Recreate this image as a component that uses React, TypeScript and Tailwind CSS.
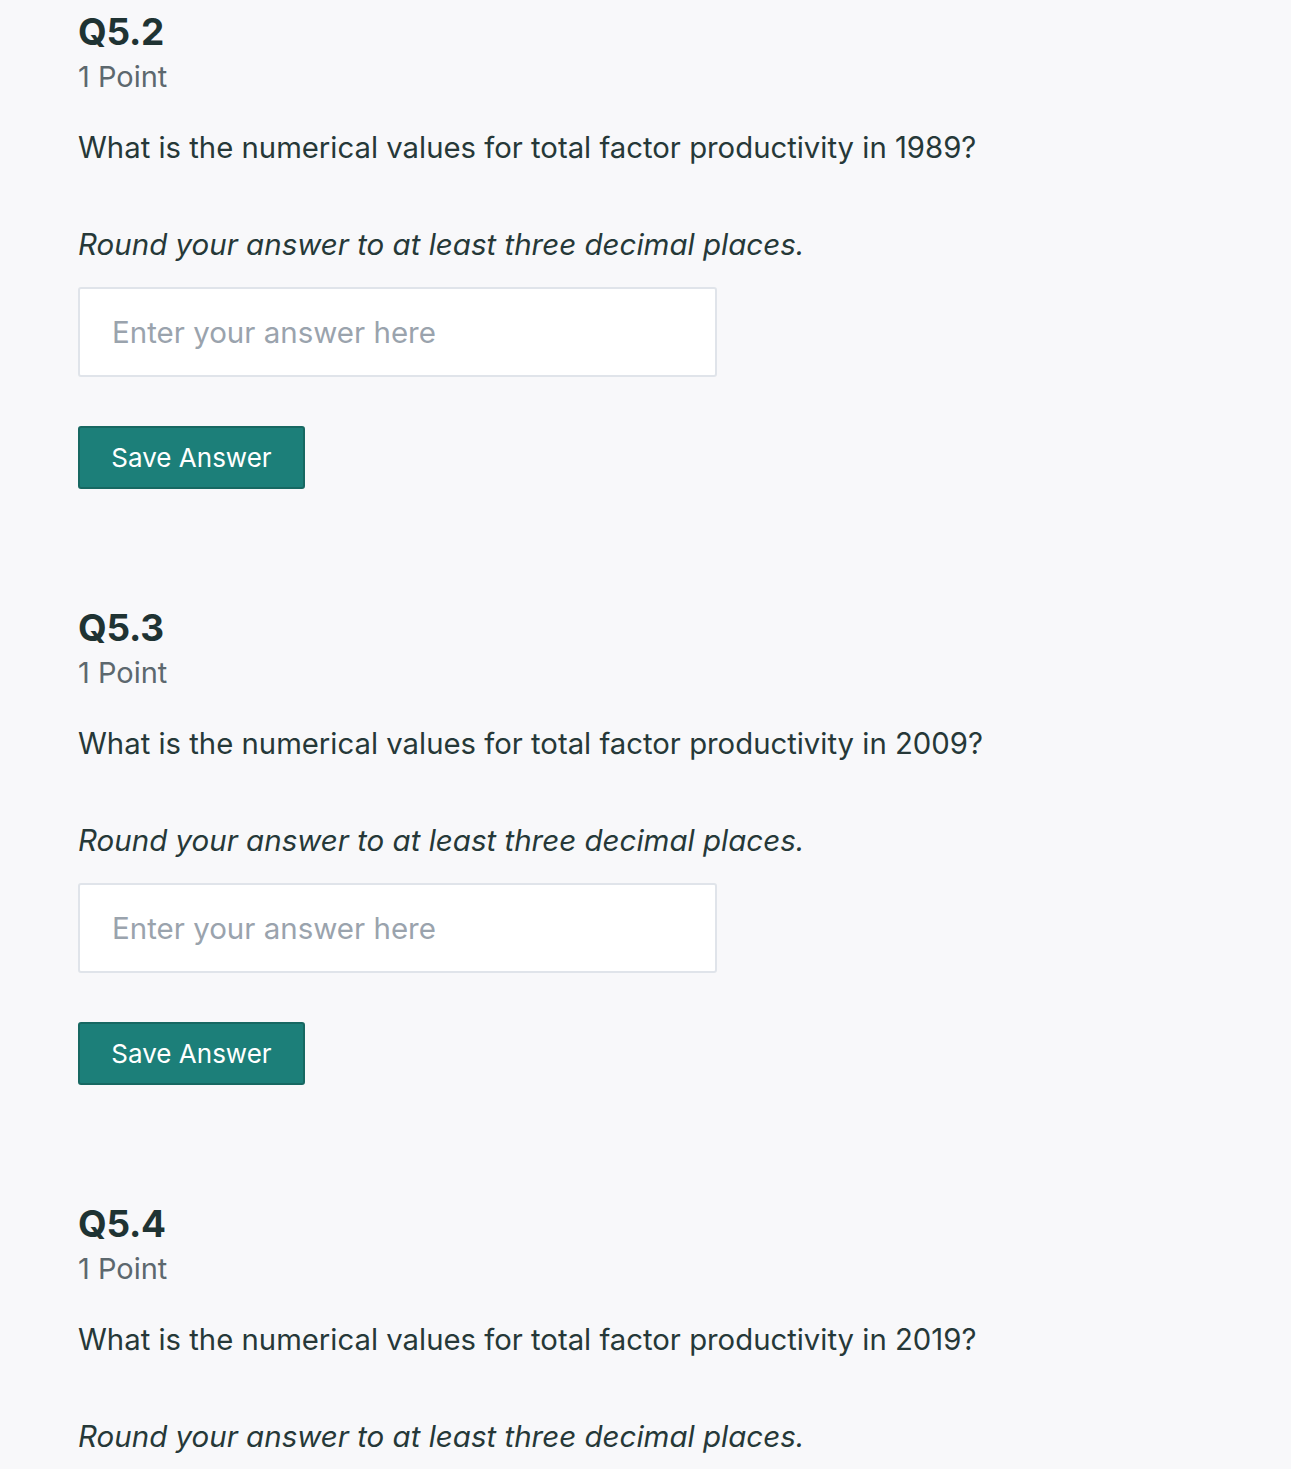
import React from "react";

const questions = [
  { id: "Q5.2", year: "1989", open: true },
  { id: "Q5.3", year: "2009", open: true },
  { id: "Q5.4", year: "2019", open: false },
];

export default function App() {
  return (
    <div
      className="min-h-screen bg-[#f8f8fa] pl-[78px] pt-[12px] text-[#263838]"
      style={{ fontFamily: "Inter, 'Noto Sans', sans-serif" }}
    >
      {questions.map((q) => (
        <div key={q.id} className="mb-[119px] last:mb-0">
          <h2 className="h-[40px] text-[37px] font-bold leading-[40px] tracking-[-0.3px] text-[#1f3333]">{q.id}</h2>
          <div className="mt-[7px] h-[36px] text-[29px] leading-[36px] text-[#5d686e]">1 Point</div>
          <p className="mt-[33px] h-[40px] text-[29.3px] leading-[40px]">
            What is the numerical values for total factor productivity in {q.year}?
          </p>
          <p className="mt-[56px] h-[40px] text-[29.5px] italic leading-[40px]">
            Round your answer to at least three decimal places.
          </p>
          {q.open && (
            <>
              <input
                type="text"
                placeholder="Enter your answer here"
                className="mt-[23px] block h-[90px] w-[639px] rounded-[3px] border-2 border-[#e0e4ea] bg-white px-[32px] text-[29.5px] text-[#263838] outline-none placeholder:text-[#9aa3ad]"
              />
              <button className="mt-[49px] block h-[63px] w-[227px] rounded-[3px] border-2 border-[#176862] bg-[#1c7f79] text-[26px] text-white">
                Save Answer
              </button>
            </>
          )}
        </div>
      ))}
    </div>
  );
}
